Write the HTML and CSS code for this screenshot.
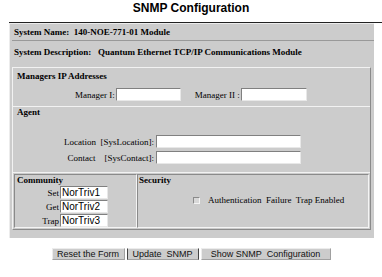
FILE: index.html
```html
<!DOCTYPE html>
<html lang="en">
<head>
    <meta charset="UTF-8">
    <title>SNMP Configuration</title>
    <link rel="stylesheet" href="styles.css">
</head>
<body>
    <!-- Title -->
    <h1 class="title">SNMP Configuration</h1>
    <div class="rule"></div>

    <!-- Main form -->
    <form class="panel">
        <div class="sys-name">System Name:&nbsp; 140-NOE-771-01 Module</div>
        <div class="sys-desc">System Description:&nbsp;&nbsp; Quantum Ethernet TCP/IP Communications Module</div>

        <div class="group">
            <!-- Managers -->
            <div class="managers">
                <div class="heading">Managers IP Addresses</div>
                <div class="manager-row">
                    <label class="field">Manager I: <input type="text" class="text mgr1"></label>
                    <label class="field">Manager II : <input type="text" class="text mgr2"></label>
                </div>
            </div>

            <!-- Agent -->
            <div class="agent">
                <div class="heading">Agent</div>
                <div class="agent-fields">
                    <label>Location&nbsp; [SysLocation]:</label>
                    <input type="text" class="text wide">
                    <label>Contact&nbsp;&nbsp;&nbsp; [SysContact]:</label>
                    <input type="text" class="text wide">
                </div>
            </div>

            <!-- Community / Security -->
            <div class="split">
                <div class="cell community">
                    <div class="heading">Community</div>
                    <div class="comm-fields">
                        <label>Set</label>
                        <input type="text" class="text short" value="NorTriv1">
                        <label>Get</label>
                        <input type="text" class="text short" value="NorTriv2">
                        <label>Trap</label>
                        <input type="text" class="text short" value="NorTriv3">
                    </div>
                </div>
                <div class="cell security">
                    <div class="heading">Security</div>
                    <label class="check-row"><span class="check"></span>Authentication&nbsp; Failure&nbsp; Trap Enabled</label>
                </div>
            </div>
        </div>
    </form>

    <!-- Buttons -->
    <div class="buttons">
        <button class="btn reset">Reset the Form</button>
        <button class="btn update">Update&nbsp; SNMP</button>
        <button class="btn show">Show SNMP&nbsp; Configuration</button>
    </div>
</body>
</html>
```

FILE: styles.css
```css
/* General body styling */
body {
    margin: 0;
    background-color: #fff;
    font-family: "Liberation Serif", "Times New Roman", serif;
    font-size: 9px;
    color: #000;
}

/* Page title */
.title {
    margin: 0;
    padding-top: 1px;
    height: 21px;
    font-family: "Liberation Sans", Arial, sans-serif;
    font-size: 12px;
    font-weight: bold;
    line-height: 14px;
    text-align: center;
}

.rule {
    margin-left: 9px;
    height: 1px;
    background-color: #222;
}

/* Gray form panel */
.panel {
    margin: 0 0 0 9px;
    width: 364px;
    padding-bottom: 8px;
    background-color: #cccccc;
    border-top: 1px solid #ececec;
    border-left: 1px solid #ececec;
}

.sys-name {
    margin-left: 2px;
    padding-left: 2px;
    height: 16px;
    line-height: 16px;
    font-weight: bold;
    border-bottom: 1px solid #999;
}

.sys-desc {
    box-sizing: border-box;
    height: 26px;
    padding: 4px 0 0 4px;
    line-height: 15px;
    font-weight: bold;
}

.group {
    margin-left: 2px;
    width: 357px;
    border: 1px solid;
    border-color: #f2f2f2 #8a8a8a #8a8a8a #f2f2f2;
}

.heading {
    font-weight: bold;
    line-height: 11px;
    padding-left: 4px;
}

/* Managers section */
.managers {
    padding-bottom: 5px;
    border-bottom: 1px solid #f2f2f2;
}

.managers .heading {
    padding-top: 2px;
    line-height: 12px;
}

.manager-row {
    display: flex;
    gap: 14px;
    margin-top: 6px;
    padding-left: 62px;
}

.field {
    display: flex;
    align-items: center;
    gap: 1px;
    white-space: nowrap;
}

/* Agent section */
.agent {
    padding-bottom: 8px;
}

.agent-fields {
    display: grid;
    grid-template-columns: 141px 145px;
    column-gap: 2px;
    row-gap: 3px;
    margin-top: 17px;
    align-items: center;
}

.agent-fields label,
.comm-fields label {
    text-align: right;
    white-space: nowrap;
}

/* Community and security */
.split {
    display: flex;
    padding: 1px;
    border-top: 1px solid #f2f2f2;
}

.cell {
    border: 1px solid;
    border-color: #8a8a8a #f4f4f4 #f4f4f4 #8a8a8a;
}

.community {
    width: 121px;
}

.community .heading {
    padding-left: 2px;
}

.comm-fields {
    display: grid;
    grid-template-columns: 44px 48px;
    column-gap: 1px;
    row-gap: 1px;
    align-items: center;
}

.security {
    flex: 1;
}

.security .heading {
    padding-left: 1px;
}

.check-row {
    display: flex;
    align-items: center;
    gap: 8px;
    margin-top: 8px;
    padding-left: 55px;
    line-height: 12px;
    white-space: nowrap;
}

.check {
    width: 5px;
    height: 5px;
    border: 1px solid;
    border-color: #8a8a8a #f4f4f4 #f4f4f4 #8a8a8a;
    background-color: #d8d8d8;
}

/* Text inputs */
.text {
    box-sizing: border-box;
    height: 13px;
    margin: 0;
    padding: 0 1px;
    border: 1px solid;
    border-color: #808080 #e8e8e8 #e8e8e8 #808080;
    background-color: #fff;
    font-family: "Liberation Sans", Arial, sans-serif;
    font-size: 10px;
    line-height: 11px;
    color: #000;
}

.mgr1 {
    width: 65px;
}

.mgr2 {
    width: 66px;
}

.wide {
    width: 145px;
}

.short {
    width: 48px;
}

/* Buttons */
.buttons {
    display: flex;
    justify-content: center;
    gap: 2px;
    margin-top: 10px;
}

.btn {
    box-sizing: border-box;
    height: 12px;
    margin: 0;
    padding: 0;
    border: 1px solid;
    border-color: #ececec #a0a0a0 #a0a0a0 #ececec;
    background-color: #cccccc;
    font-family: "Liberation Sans", Arial, sans-serif;
    font-size: 9px;
    line-height: 10px;
    color: #111;
}

.reset {
    width: 73px;
}

.update {
    width: 72px;
    border-left-color: #444;
    border-right-color: #444;
}

.show {
    width: 130px;
}
```
